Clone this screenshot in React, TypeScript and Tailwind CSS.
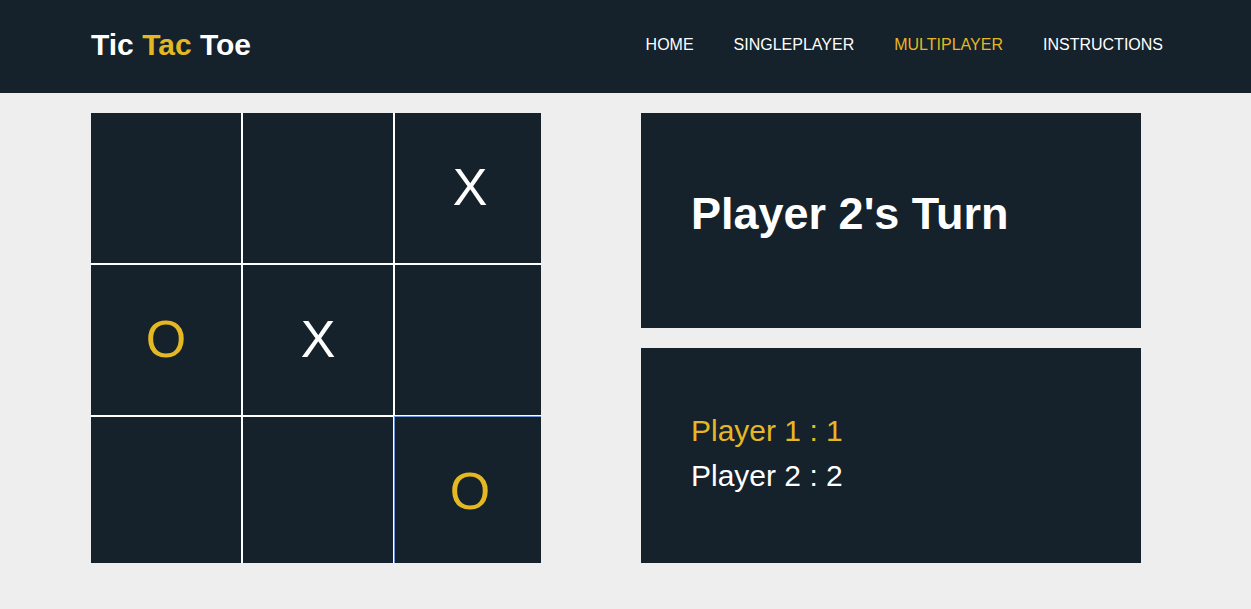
import React from "react";

const cells: (string | null)[] = [null, null, "X", "O", "X", null, null, null, "O"];

export default function App() {
  return (
    <div
      className="min-h-[609px] bg-[#eeeeee]"
      style={{ fontFamily: '"Liberation Sans", Arial, sans-serif' }}
    >
      <header className="h-[93px] bg-[#15212b] flex items-center justify-between pl-[91px] pr-[88px]">
        <div className="text-[30px] font-bold text-white leading-none pb-[3px]">
          Tic <span className="text-[#e4b823]">Tac</span> Toe
        </div>
        <nav className="flex gap-[40px] text-[16px] text-white leading-none pb-[3px]">
          <span>HOME</span>
          <span>SINGLEPLAYER</span>
          <span className="text-[#e4b823]">MULTIPLAYER</span>
          <span>INSTRUCTIONS</span>
        </nav>
      </header>
      <main className="flex pl-[91px] pt-[20px] gap-[100px]">
        <div className="w-[450px] h-[450px] overflow-hidden bg-white">
          <div className="grid grid-cols-[150px_150px_150px] grid-rows-[150px_150px_150px] gap-[2px] w-[454px]">
            {cells.map((c, i) => (
              <div
                key={i}
                className={
                  "bg-[#15212b] flex items-center justify-center text-[52px] leading-none pb-[3px] " +
                  (c === "O" ? "text-[#e4b823] " : "text-white ") +
                  (i === 8 ? "shadow-[-1px_-1px_0_#7196d8]" : "")
                }
              >
                {c}
              </div>
            ))}
          </div>
        </div>
        <div className="flex flex-col gap-[20px] w-[500px]">
          <div className="h-[215px] bg-[#15212b] flex items-center pl-[50px] pb-[14px]">
            <div className="text-[45px] font-bold text-white">Player 2's Turn</div>
          </div>
          <div className="h-[215px] bg-[#15212b] flex flex-col justify-center pl-[50px] pb-[6px] text-[30px] leading-[45px]">
            <div className="text-[#e4b823]">Player 1 : 1</div>
            <div className="text-white">Player 2 : 2</div>
          </div>
        </div>
      </main>
    </div>
  );
}
